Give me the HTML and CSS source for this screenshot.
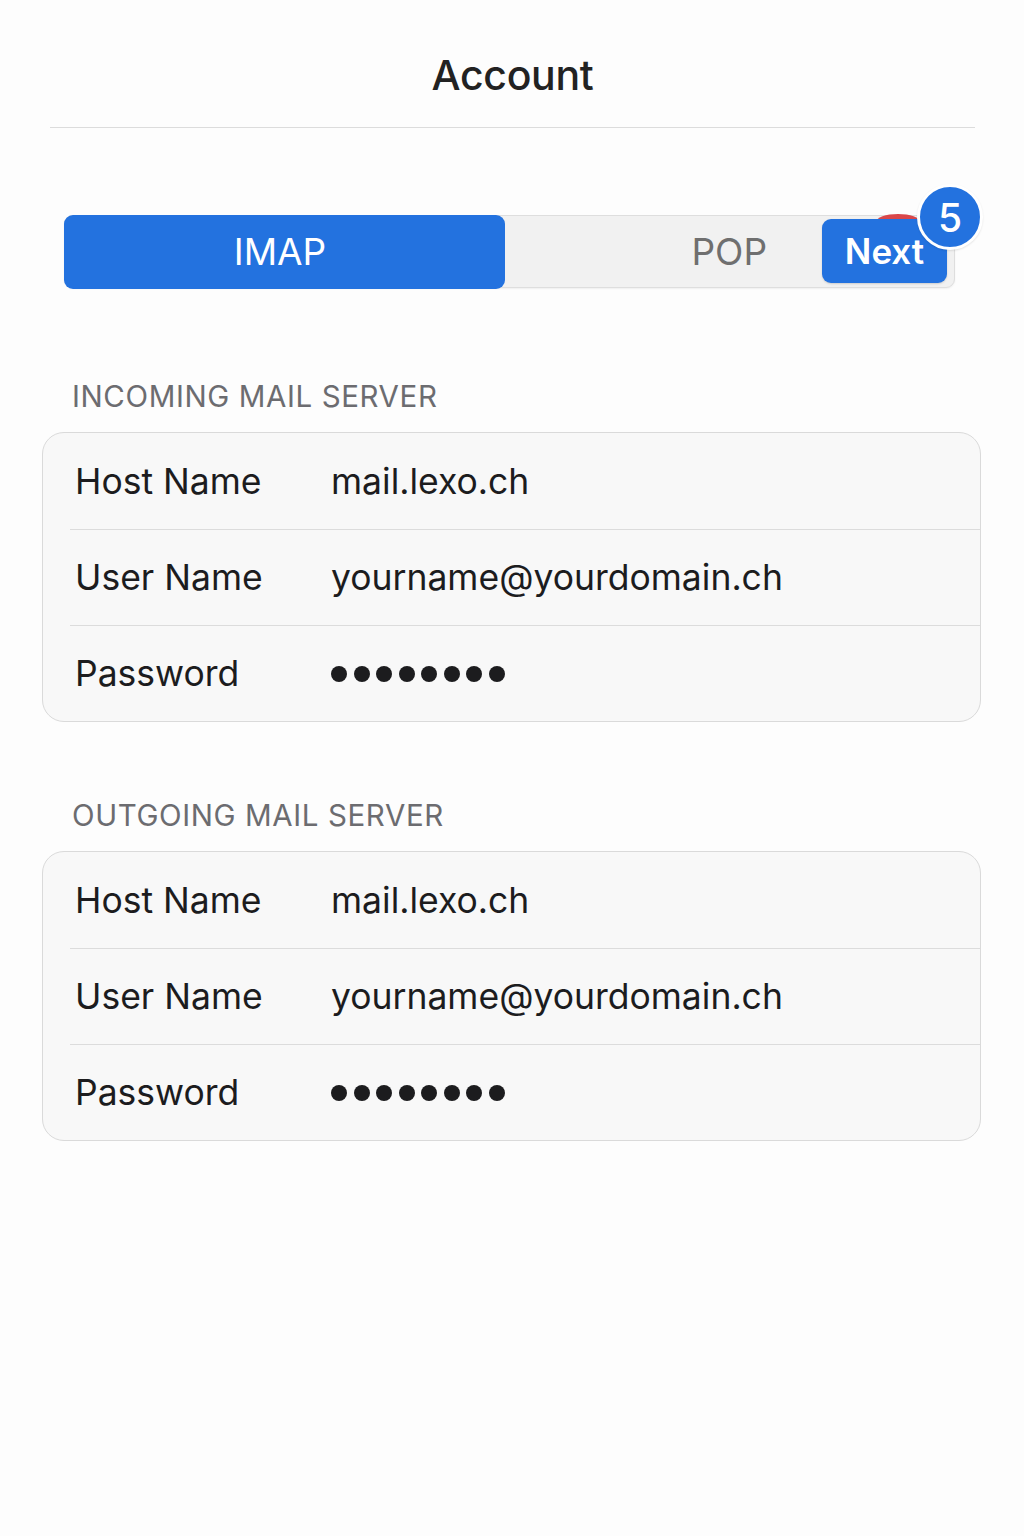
FILE: index.html
```html
<!DOCTYPE html>
<html lang="en">
<head>
<meta charset="utf-8">
<title>Account</title>
<link rel="stylesheet" href="styles.css">
</head>
<body>
<div class="screen">
  <header class="topbar">
    <h1 class="title">Account</h1>
  </header>

  <div class="segmented">
    <div class="seg seg-active">IMAP</div>
    <div class="seg">POP</div>
    <div class="next-wrap">
      <span class="next-flag"></span>
      <button class="next-btn">Next</button>
      <span class="badge">5</span>
    </div>
  </div>

  <section class="group">
    <h2 class="group-title">INCOMING MAIL SERVER</h2>
    <div class="card">
      <div class="row">
        <span class="label">Host Name</span>
        <span class="value">mail.lexo.ch</span>
      </div>
      <div class="row">
        <span class="label">User Name</span>
        <span class="value">yourname@yourdomain.ch</span>
      </div>
      <div class="row">
        <span class="label">Password</span>
        <span class="value dots" aria-label="password"><i></i><i></i><i></i><i></i><i></i><i></i><i></i><i></i></span>
      </div>
    </div>
  </section>

  <section class="group group-out">
    <h2 class="group-title">OUTGOING MAIL SERVER</h2>
    <div class="card">
      <div class="row">
        <span class="label">Host Name</span>
        <span class="value">mail.lexo.ch</span>
      </div>
      <div class="row">
        <span class="label">User Name</span>
        <span class="value">yourname@yourdomain.ch</span>
      </div>
      <div class="row">
        <span class="label">Password</span>
        <span class="value dots" aria-label="password"><i></i><i></i><i></i><i></i><i></i><i></i><i></i><i></i></span>
      </div>
    </div>
  </section>
</div>
</body>
</html>
```

FILE: styles.css
```css
* {
  box-sizing: border-box;
}

html, body {
  margin: 0;
  padding: 0;
  background: #fdfdfd;
}

body {
  font-family: "Inter", "Liberation Sans", sans-serif;
  color: #1c1c1e;
  width: 1024px;
  height: 1536px;
}

.screen {
  display: flex;
  flex-direction: column;
}

/* navigation bar */
.topbar {
  margin: 0 49px 0 50px;
  height: 128px;
  border-bottom: 1.5px solid #dcdcdc;
  display: flex;
  justify-content: center;
  padding-top: 52px;
}

.title {
  margin: 0;
  font-size: 41px;
  line-height: 46px;
  font-weight: 500;
  color: #222222;
  letter-spacing: -0.3px;
}

/* IMAP / POP switch */
.segmented {
  position: relative;
  margin: 87px 0 0 64px;
  width: 891px;
  height: 73px;
  display: flex;
  background: #f1f1f1;
  border: 1.5px solid #dedede;
  border-radius: 9px;
  box-shadow: 0 1px 2px rgba(0, 0, 0, 0.06);
}

.seg {
  flex: 1;
  display: flex;
  align-items: center;
  justify-content: center;
  font-size: 37px;
  color: #6f6f6f;
}

.seg-active {
  flex: 0 0 441px;
  margin: -1.5px 0 -1.5px -1.5px;
  padding-right: 8px;
  background: #2372df;
  color: #ffffff;
  border-radius: 9px;
}

.next-wrap {
  position: absolute;
  left: 757px;
  top: 3px;
  width: 125px;
  height: 64px;
}

.next-flag {
  position: absolute;
  left: 54px;
  top: -5px;
  width: 44px;
  height: 8px;
  background: #d9474a;
  border-radius: 50% 50% 0 0 / 100% 100% 0 0;
}

.next-btn {
  position: relative;
  width: 125px;
  height: 64px;
  border: 0;
  border-radius: 9px;
  background: #2372df;
  color: #ffffff;
  font-family: "Inter", "Liberation Sans", sans-serif;
  font-size: 35px;
  font-weight: 600;
  padding: 0;
  box-shadow: 0 1px 2px rgba(0, 0, 0, 0.15);
}

.badge {
  position: absolute;
  left: 95px;
  top: -35px;
  width: 66px;
  height: 66px;
  border-radius: 50%;
  background: #2372df;
  border: 3px solid #ffffff;
  color: #ffffff;
  font-size: 39px;
  font-weight: 500;
  display: flex;
  align-items: center;
  justify-content: center;
  box-shadow: 0 1px 2px rgba(0, 0, 0, 0.1);
}

/* grouped settings */
.group {
  margin: 91px 43px 0 42px;
}

.group-out {
  margin-top: 76px;
}

.group-title {
  margin: 0 0 19px 30px;
  font-size: 29.5px;
  line-height: 34px;
  font-weight: 400;
  color: #6c6c70;
  letter-spacing: 0.6px;
}

.card {
  background: #f8f8f8;
  border: 1.5px solid #dadada;
  border-radius: 22px;
  overflow: hidden;
}

.row {
  height: 96px;
  display: flex;
  align-items: center;
  padding-left: 32px;
  font-size: 35.5px;
  position: relative;
}

.row + .row::before {
  content: "";
  position: absolute;
  left: 27px;
  right: 0;
  top: 0;
  border-top: 1.5px solid #dcdcdc;
}

.label {
  width: 256px;
  flex: none;
  color: #1c1c1e;
}

.value {
  color: #1c1c1e;
}

.dots {
  display: flex;
  gap: 6.5px;
  padding-top: 2px;
}

.dots i {
  display: block;
  width: 16px;
  height: 16px;
  border-radius: 50%;
  background: #1c1c1e;
}
```
